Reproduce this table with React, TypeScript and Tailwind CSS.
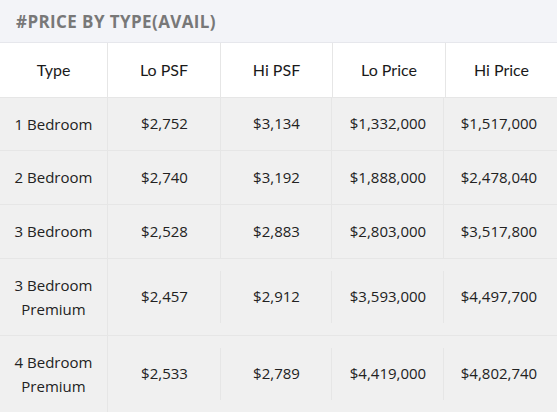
const rows = [
  { type: ["1 Bedroom"], loPsf: "$2,752", hiPsf: "$3,134", loPrice: "$1,332,000", hiPrice: "$1,517,000" },
  { type: ["2 Bedroom"], loPsf: "$2,740", hiPsf: "$3,192", loPrice: "$1,888,000", hiPrice: "$2,478,040" },
  { type: ["3 Bedroom"], loPsf: "$2,528", hiPsf: "$2,883", loPrice: "$2,803,000", hiPrice: "$3,517,800" },
  { type: ["3 Bedroom", "Premium"], loPsf: "$2,457", hiPsf: "$2,912", loPrice: "$3,593,000", hiPrice: "$4,497,700" },
  { type: ["4 Bedroom", "Premium"], loPsf: "$2,533", hiPsf: "$2,789", loPrice: "$4,419,000", hiPrice: "$4,802,740" },
];

const widths = ["w-[108px]", "w-[113px]", "w-[112px]", "w-[113px]", "w-[111px]"];

export default function App() {
  return (
    <div className="w-[557px] h-[412px] overflow-hidden bg-[#f0f0f0]">
      <div className="h-[43px] bg-[#f3f4f8] border-b border-[#e6e7ec] flex items-center px-4">
        <h2 className="font-['Open_Sans',sans-serif] font-bold text-[17px] text-[#787878] uppercase tracking-[0.4px] pt-px">
          #Price by Type(Avail)
        </h2>
      </div>

      <div className="flex h-[55px] bg-white border-b border-[#e6e6e6] font-['Lato',sans-serif] text-[16px] text-[#1a1a1a]">
        {["Type", "Lo PSF", "Hi PSF", "Lo Price", "Hi Price"].map((h, i) => (
          <div
            key={h}
            className={`${widths[i]} flex items-center justify-center ${i < 4 ? "border-r border-[#e6e6e6]" : ""}`}
          >
            {h}
          </div>
        ))}
      </div>

      {rows.map((r, idx) => {
        const tall = r.type.length > 1;
        const vals = [r.loPsf, r.hiPsf, r.loPrice, r.hiPrice];
        return (
          <div
            key={r.type.join(" ")}
            className={`flex items-center border-b border-[#e6e6e6] font-['Open_Sans',sans-serif] text-[15px] text-[#222] ${
              tall ? "h-[77px]" : idx === 0 ? "h-[53px]" : "h-[54px]"
            }`}
          >
            <div className={`${widths[0]} self-stretch flex flex-col items-center justify-center leading-[24px] border-r border-[#e6e6e6] pb-px`}>
              {r.type.map((t) => (
                <span key={t}>{t}</span>
              ))}
            </div>
            {vals.map((v, i) => (
              <div
                key={i}
                className={`${widths[i + 1]} flex items-center justify-center pb-px ${
                  tall ? "h-[52px]" : "self-stretch"
                } ${i > 0 ? "border-l border-[#e6e6e6] -ml-px" : ""}`}
              >
                {v}
              </div>
            ))}
          </div>
        );
      })}
    </div>
  );
}
